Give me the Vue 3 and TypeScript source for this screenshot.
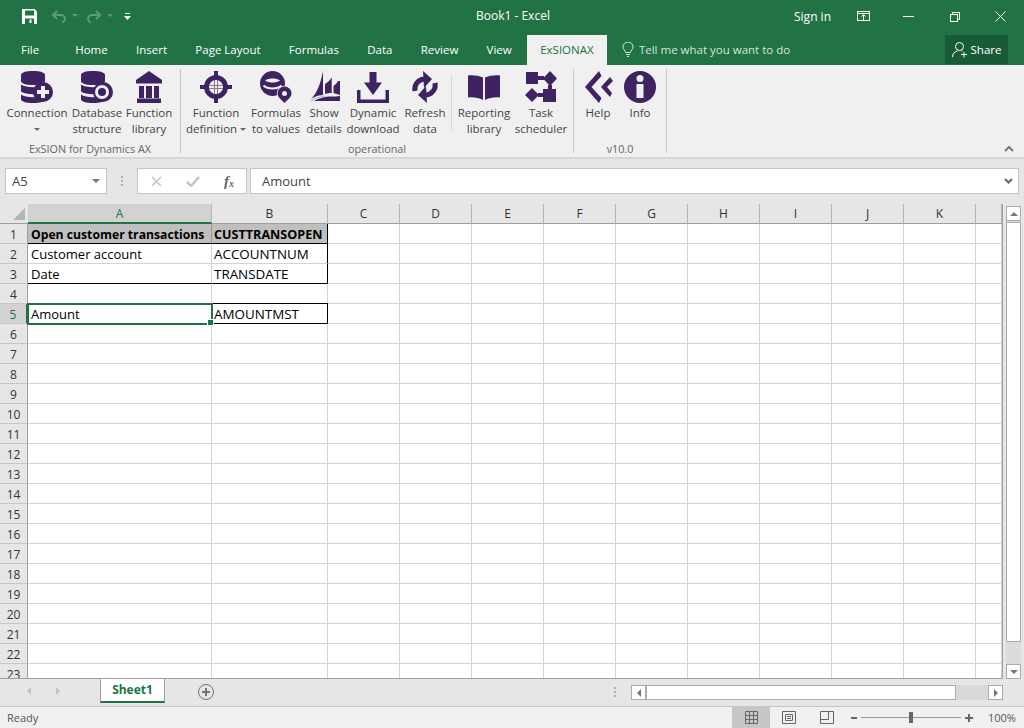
<script setup lang="ts">
interface RibbonItem {
  icon: string;
  lines: string[];
  width: number;
  caret?: boolean;
}

interface RibbonGroup {
  label: string;
  width: number;
  items: RibbonItem[];
  split?: number;
}

const tabs = ['File', 'Home', 'Insert', 'Page Layout', 'Formulas', 'Data', 'Review', 'View'];

const groups: RibbonGroup[] = [
  {
    label: 'ExSION for Dynamics AX',
    width: 181,
    items: [
      { icon: 'connection', lines: ['Connection'], width: 62, caret: true },
      { icon: 'database', lines: ['Database', 'structure'], width: 58 },
      { icon: 'library', lines: ['Function', 'library'], width: 46 },
    ],
  },
  {
    label: 'operational',
    width: 393,
    split: 5,
    items: [
      { icon: 'target', lines: ['Function', 'definition'], width: 58, caret: true },
      { icon: 'pin', lines: ['Formulas', 'to values'], width: 62 },
      { icon: 'sails', lines: ['Show', 'details'], width: 34 },
      { icon: 'download', lines: ['Dynamic', 'download'], width: 64 },
      { icon: 'refresh', lines: ['Refresh', 'data'], width: 40 },
      { icon: 'book', lines: ['Reporting', 'library'], width: 64 },
      { icon: 'task', lines: ['Task', 'scheduler'], width: 50 },
    ],
  },
  {
    label: 'v10.0',
    width: 93,
    items: [
      { icon: 'help', lines: ['Help'], width: 36 },
      { icon: 'info', lines: ['Info'], width: 48 },
    ],
  },
];

const columns = ['A', 'B', 'C', 'D', 'E', 'F', 'G', 'H', 'I', 'J', 'K', ''];
const rows = Array.from({ length: 23 }, (_, i) => i + 1);

const cells: Record<string, string> = {
  A1: 'Open customer transactions',
  B1: 'CUSTTRANSOPEN',
  A2: 'Customer account',
  B2: 'ACCOUNTNUM',
  A3: 'Date',
  B3: 'TRANSDATE',
  A5: 'Amount',
  B5: 'AMOUNTMST',
};

function cellClass(col: string, row: number) {
  const id = col + row;
  return {
    'cell--a': col === 'A',
    'cell--b': col === 'B',
    'cell--head': row === 1 && (col === 'A' || col === 'B'),
    'cell--selected': id === 'A5',
    'cell--box-top': row === 5 && col === 'B',
    'cell--box-bottom': (row === 1 || row === 3 || row === 5) && (col === 'A' || col === 'B') && id !== 'A5',
    'cell--box-right': (row === 1 || row === 2 || row === 3 || row === 5) && col === 'B',
    'cell--box-split': row === 1 && col === 'A',
  };
}
</script>

<template>
  <div class="window">
    <header class="titlebar">
      <div class="quick">
        <svg class="q-save" width="15" height="15" viewBox="0 0 15 15">
          <path d="M0 0h12.500L15 2.500V15H0z" fill="#fff" />
          <rect x="3" y="1.500" width="9" height="5" fill="#217346" />
          <rect x="3" y="9.500" width="9" height="5.500" fill="#217346" />
          <rect x="7.500" y="10.500" width="2" height="3.500" fill="#fff" />
        </svg>
        <svg class="q-undo" width="30" height="14" viewBox="0 0 30 14" fill="none" stroke="#5e9a79" stroke-width="2">
          <path d="M6 1 2 5l4 4M2 5h8a4 4 0 0 1 4 4 4 4 0 0 1-3 3.500" />
          <path d="M21 5h6l-3 3z" fill="#5e9a79" stroke="none" transform="translate(0 -1)" />
        </svg>
        <svg class="q-redo" width="30" height="14" viewBox="0 0 30 14" fill="none" stroke="#5e9a79" stroke-width="2">
          <path d="M10 1l4 4-4 4M14 5H6a4 4 0 0 0-4 4 4 4 0 0 0 3 3.500" />
          <path d="M21 5h6l-3 3z" fill="#5e9a79" stroke="none" transform="translate(0 -1)" />
        </svg>
        <svg class="q-more" width="7" height="8" viewBox="0 0 7 8">
          <rect x="1" y="0" width="5" height="1" fill="#fff" />
          <path d="M0 3h7L3.500 7z" fill="#fff" />
        </svg>
      </div>
      <div class="title">Book1 - Excel</div>
      <div class="win-actions">
        <span class="signin">Sign in</span>
        <svg class="w-display" width="14" height="11" viewBox="0 0 14 11" fill="none" stroke="#fff">
          <rect x="0.500" y="0.500" width="12" height="9" />
          <path d="M0.500 2.500h12M6.500 9V4M4.500 5.500l2-2 2 2" />
        </svg>
        <svg class="w-min" width="11" height="1" viewBox="0 0 11 1"><rect width="11" height="1" fill="#fff" /></svg>
        <svg class="w-restore" width="10" height="10" viewBox="0 0 10 10" fill="none" stroke="#fff">
          <rect x="0.500" y="2.500" width="7" height="7" />
          <path d="M2.500 2.500v-2h7v7h-2" />
        </svg>
        <svg class="w-close" width="11" height="11" viewBox="0 0 11 11" fill="none" stroke="#fff">
          <path d="M0.500 0.500l10 10M10.500 0.500l-10 10" />
        </svg>
      </div>
    </header>

    <nav class="tabbar">
      <span v-for="tab in tabs" :key="tab" class="tab" :class="'tab--' + tab.replace(' ', '')">{{ tab }}</span>
      <span class="tab tab--active">ExSIONAX</span>
      <span class="tell">
        <svg width="12" height="15" viewBox="0 0 12 15" fill="none" stroke="#d5e5dc">
          <path d="M3.500 10.500c0-2-2.500-3-2.500-5.500a5 5 0 0 1 10 0c0 2.500-2.500 3.500-2.500 5.500zM4 12.500h4M5 14.500h2" />
        </svg>
        Tell me what you want to do
      </span>
      <span class="share">
        <svg width="16" height="17" viewBox="0 0 16 17" fill="none" stroke="#fff">
          <circle cx="7.500" cy="5.500" r="4" />
          <path d="M0.500 16c0-3 2-5.500 5-6M9.500 10h1M12 11v5.500M9 13.500h6" />
        </svg>
        Share
      </span>
    </nav>

    <section class="ribbon">
      <div v-for="group in groups" :key="group.label" class="group" :style="{ width: group.width + 'px' }">
        <div class="group-items">
          <template v-for="(item, i) in group.items" :key="item.icon">
            <span v-if="group.split === i" class="inner-sep"></span>
            <div class="rb" :style="{ width: item.width + 'px' }">
              <svg class="rb-icon" width="32" height="32" viewBox="0 0 32 32" fill="#3f2261">
                <template v-if="item.icon === 'connection' || item.icon === 'database'">
                  <path d="M0 4C0 1.500 5 0 12 0s12 1.500 12 4v6c0 2.500-5 4-12 4S0 12.500 0 10z" />
                  <path d="M0 13.500c2.500 1.800 7 2.700 12 2.700s9.500-.9 12-2.700v7c-2.500 1.800-7 2.700-12 2.700S2.500 22.300 0 20.500z" />
                  <path d="M0 23.500c2.500 1.800 7 2.700 12 2.700s9.500-.9 12-2.700V28c0 2.500-5 4-12 4S0 30.500 0 28z" />
                  <circle cx="22" cy="21" r="10" />
                  <path v-if="item.icon === 'connection'" d="M20 15h4v4h4v4h-4v4h-4v-4h-4v-4h4z" fill="#f0f0f0" />
                  <template v-else>
                    <circle cx="21" cy="21" r="7" fill="#f0f0f0" />
                    <circle cx="21" cy="21" r="4" />
                  </template>
                </template>
                <template v-else-if="item.icon === 'library'">
                  <path d="M16 0l13 9v3.500H3V9z" />
                  <rect x="6" y="15" width="5" height="12" />
                  <rect x="13" y="15" width="6" height="12" />
                  <rect x="21" y="15" width="5" height="12" />
                  <rect x="4" y="27.500" width="24" height="4.500" />
                </template>
                <template v-else-if="item.icon === 'target'">
                  <path fill-rule="evenodd" d="M16 4a12 12 0 1 1 0 24 12 12 0 0 1 0-24zm0 5a7 7 0 1 0 0 14 7 7 0 0 0 0-14z" />
                  <rect x="14" y="0" width="4" height="8" />
                  <rect x="14" y="24" width="4" height="8" />
                  <rect x="0" y="14" width="8" height="4" />
                  <rect x="24" y="14" width="8" height="4" />
                  <path d="M14.500 9v14M17.500 9v14M9 14.500h14M9 17.500h14" stroke="#8a7699" stroke-width="1" fill="none" />
                </template>
                <template v-else-if="item.icon === 'pin'">
                  <circle cx="12.500" cy="12.500" r="12.500" />
                  <path d="M5 9.500c2-1.500 5-2 7.500-2s5.500.5 7.500 2c-2 1.500-5 2-7.500 2s-5.500-.5-7.500-2z" fill="#f0f0f0" />
                  <path d="M3.500 14.500c2 1.800 5.500 3 9 3s7-1.200 9-3" fill="none" stroke="#f0f0f0" stroke-width="2" />
                  <path fill-rule="evenodd" d="M24.500 15.500a7 7 0 0 1 7 7c0 3.500-4 6.500-7 9.500-3-3-7-6-7-9.500a7 7 0 0 1 7-7zm0 4.500a2.500 2.500 0 1 0 0 5 2.500 2.500 0 0 0 0-5z" stroke="#f0f0f0" stroke-width="1.500" paint-order="stroke" />
                </template>
                <template v-else-if="item.icon === 'sails'">
                  <path d="M0 30C7 26 12 16 15 0v24C9.500 24 4 27 0 30z" />
                  <path d="M17 23V13c2.500-1.500 5-3.500 6.700-6.700V22c-2.500 0-4.500.3-6.700 1z" />
                  <path d="M25.500 22V15c2-1.500 3.500-3 4.500-5h2v14z" />
                  <path d="M6 30c5-3 11-4.500 16-4.500 4 0 7 0 10-.5v5z" />
                  <path d="M3 30c4-3 9-4.500 14-5" fill="none" stroke="#b9afc4" stroke-width="1" />
                </template>
                <template v-else-if="item.icon === 'download'">
                  <path d="M12.500 1h7v10.500H25L16 24 7 11.500h5.500z" />
                  <path d="M0 19h3.500v9.500h25V19H32v13H0z" />
                </template>
                <template v-else-if="item.icon === 'refresh'">
                  <g>
                    <path d="M14 0l9 8-8 9z" />
                    <path d="M6 20A10 10 0 0 1 15 8" fill="none" stroke="#3f2261" stroke-width="5" />
                  </g>
                  <g transform="rotate(180 16 16)">
                    <path d="M14 0l9 8-8 9z" />
                    <path d="M6 20A10 10 0 0 1 15 8" fill="none" stroke="#3f2261" stroke-width="5" />
                  </g>
                </template>
                <template v-else-if="item.icon === 'book'">
                  <path d="M0 4.500c5-.5 10 0 15 2V29c-4-2-9-3-15-2.500z" />
                  <path d="M32 4.500c-5-.5-10 0-15 2V29c4-2 9-3 15-2.500z" />
                </template>
                <template v-else-if="item.icon === 'task'">
                  <rect x="1" y="1" width="12" height="12" />
                  <path d="M25 0l7 7.500-7 7.500-7-7.500z" />
                  <path d="M7 17l7 7-7 7-7-7z" />
                  <rect x="18" y="18" width="13" height="13" />
                  <path d="M13 5h6v4h-6zM23 14h4v5h-4zM13 22h6v4h-6z" />
                </template>
                <template v-else-if="item.icon === 'help'">
                  <path d="M3 16 17 0l2.500 5-10 11 10 11L17 32z" />
                  <path d="M28 6l3 4-6 6 5 6-2 4-9-10z" />
                </template>
                <template v-else>
                  <circle cx="16" cy="16" r="16" />
                  <circle cx="16" cy="7.500" r="3.500" fill="#f0f0f0" />
                  <rect x="12.500" y="13" width="7" height="14" fill="#f0f0f0" />
                </template>
              </svg>
              <div class="rb-text">
                <span v-for="line in item.lines" :key="line" class="rb-line">{{ line }}<i v-if="item.caret && line === 'definition'" class="caret"></i></span>
                <span v-if="item.caret && item.lines.length === 1" class="rb-line"><i class="caret caret--alone"></i></span>
              </div>
            </div>
          </template>
        </div>
        <div class="group-label">{{ group.label }}</div>
      </div>
      <svg class="collapse" width="10" height="6" viewBox="0 0 10 6" fill="none" stroke="#777" stroke-width="2">
        <path d="M1 5l4-4 4 4" />
      </svg>
    </section>

    <section class="formula">
      <div class="namebox">
        <span>A5</span>
        <i class="namebox-caret"></i>
      </div>
      <div class="formula-dots"><i></i><i></i><i></i></div>
      <div class="fx-box">
        <svg width="11" height="11" viewBox="0 0 11 11" fill="none" stroke="#c6c6c6" stroke-width="1.500"><path d="M1 1l9 9M10 1l-9 9" /></svg>
        <svg width="14" height="11" viewBox="0 0 14 11" fill="none" stroke="#c6c6c6" stroke-width="2.500"><path d="M1 6l4 4 8-9" /></svg>
        <span class="fx">f<sub>x</sub></span>
      </div>
      <div class="formula-input">
        <span>Amount</span>
        <svg width="9" height="6" viewBox="0 0 9 6" fill="none" stroke="#666" stroke-width="2"><path d="M1 1l3.500 3.500L8 1" /></svg>
      </div>
    </section>

    <section class="sheet-area">
      <div class="sheet-clip">
        <div class="sheet">
          <div class="corner"><i></i></div>
          <div v-for="col in columns" :key="col" class="col-head" :class="{ 'col-head--on': col === 'A' }">{{ col }}</div>
          <template v-for="row in rows" :key="row">
            <div class="row-head" :class="{ 'row-head--on': row === 5 }">{{ row }}</div>
            <div
              v-for="col in columns"
              :key="col + row"
              class="cell"
              :class="cellClass(col, row)"
            >{{ cells[col + row] }}</div>
          </template>
        </div>
      </div>
      <div class="vscroll">
        <span class="sb-btn"><i class="arrow-up"></i></span>
        <span class="sb-track"><span class="sb-thumb"></span></span>
        <span class="sb-btn"><i class="arrow-down"></i></span>
      </div>
    </section>

    <section class="sheetbar">
      <i class="nav-left"></i>
      <i class="nav-right"></i>
      <span class="sheet-tab">Sheet1</span>
      <svg class="add-sheet" width="16" height="16" viewBox="0 0 16 16" fill="none" stroke="#777">
        <circle cx="8" cy="8" r="7.500" />
        <path d="M8 4v8M4 8h8" stroke-width="2" />
      </svg>
      <div class="formula-dots formula-dots--bar"><i></i><i></i><i></i></div>
      <div class="hscroll">
        <span class="hs-btn"><i class="arrow-left"></i></span>
        <span class="hs-thumb"></span>
        <span class="hs-rest"></span>
        <span class="hs-btn"><i class="arrow-right"></i></span>
      </div>
    </section>

    <footer class="status">
      <span class="ready">Ready</span>
      <div class="views">
        <span class="view view--on">
          <svg width="13" height="13" viewBox="0 0 13 13" fill="none" stroke="#666">
            <path d="M.5.500h12v12H.500zM.500 4.500h12M.500 8.500h12M4.500.500v12M8.500.500v12" />
          </svg>
        </span>
        <span class="view">
          <svg width="14" height="13" viewBox="0 0 14 13" fill="none" stroke="#666">
            <path d="M.5.500h13v12H.500zM3.500 3.500h7v6h-7zM5 5.500h4M5 7.500h4" />
          </svg>
        </span>
        <span class="view">
          <svg width="14" height="13" viewBox="0 0 14 13" fill="none" stroke="#666">
            <path d="M.5.500h13v12H.500zM.500 8.500h8V.500" />
          </svg>
        </span>
      </div>
      <div class="zoom">
        <i class="zoom-minus"></i>
        <div class="zoom-track"><i class="zoom-thumb"></i></div>
        <i class="zoom-plus"></i>
        <span class="zoom-pct">100%</span>
      </div>
    </footer>
  </div>
</template>

<style scoped>
.window {
  width: 1024px;
  height: 728px;
  display: flex;
  flex-direction: column;
  overflow: hidden;
  background: #e6e6e6;
  font-family: "Open Sans", "Noto Sans", sans-serif;
  font-size: 11.5px;
  color: #444;
}

.titlebar {
  height: 33px;
  flex: none;
  background: #217346;
  color: #fff;
  display: flex;
  align-items: center;
  position: relative;
}

.quick {
  display: flex;
  align-items: center;
  padding-left: 22px;
}

.q-undo { margin-left: 14px; }
.q-redo { margin-left: 5px; }
.q-more { margin-left: 8px; }

.title {
  position: absolute;
  left: 476px;
  top: 8px;
  font-size: 12px;
  line-height: 16px;
}

.win-actions {
  margin-left: auto;
  display: flex;
  align-items: center;
}

.signin { margin-right: 26px; line-height: 16px; font-size: 12px; }
.w-display { margin-right: 32px; }
.w-min { margin-right: 36px; }
.w-restore { margin-right: 35px; }
.w-close { margin-right: 18px; }

.tabbar {
  height: 32px;
  flex: none;
  background: #217346;
  color: #fff;
  display: flex;
  align-items: flex-end;
  position: relative;
}

.tab {
  height: 30px;
  line-height: 30px;
  white-space: nowrap;
  margin-left: 28.300px;
}

.tab--File { margin-left: 21px; }
.tab--Home { margin-left: 36px; }

.tab--active {
  margin-left: 15.200px;
  width: 80px;
  text-align: center;
  background: #f0f0f0;
  color: #217346;
}

.tell {
  margin-left: 15px;
  height: 29px;
  margin-bottom: 1px;
  display: flex;
  align-items: center;
  gap: 5px;
  color: #d5e5dc;
}

.share {
  position: absolute;
  right: 16px;
  top: 2px;
  width: 63px;
  height: 29px;
  background: #185c37;
  display: flex;
  align-items: center;
  justify-content: center;
  gap: 3px;
}

.ribbon {
  height: 92px;
  flex: none;
  background: #f0f0f0;
  border-bottom: 2px solid #d6d6d6;
  display: flex;
  position: relative;
}

.group {
  height: 84px;
  margin-top: 4px;
  border-right: 1px solid #c6c6c6;
  display: flex;
  flex-direction: column;
  box-sizing: border-box;
  flex: none;
}

.group-items {
  height: 72px;
  flex: none;
  box-sizing: border-box;
  padding: 2px 0 0 6px;
  display: flex;
  align-items: flex-start;
}

.inner-sep {
  width: 1px;
  height: 55px;
  margin: 4px 0 0 6px;
  background: #d6d6d6;
  flex: none;
}

.rb {
  display: flex;
  flex-direction: column;
  align-items: center;
  flex: none;
}

.rb-icon { flex: none; }

.rb-text {
  margin-top: 2px;
  display: flex;
  flex-direction: column;
  align-items: center;
}

.rb-line {
  line-height: 16px;
  white-space: nowrap;
}

.caret {
  display: inline-block;
  width: 0;
  height: 0;
  margin-left: 3px;
  vertical-align: 2px;
  border-left: 3px solid transparent;
  border-right: 3px solid transparent;
  border-top: 3px solid #666;
}

.caret--alone { margin-left: 0; }

.group-label {
  text-align: center;
  font-size: 10.800px;
  line-height: 15px;
  color: #666;
}

.collapse {
  position: absolute;
  right: 10px;
  top: 81px;
}

.formula {
  height: 45px;
  flex: none;
  box-sizing: border-box;
  padding-top: 9px;
  display: flex;
  align-items: flex-start;
}

.namebox {
  margin-left: 5px;
  width: 102px;
  height: 26px;
  box-sizing: border-box;
  border: 1px solid #c6c6c6;
  background: #fff;
  display: flex;
  align-items: center;
  padding: 0 6px;
  font-size: 13px;
  color: #444;
}

.namebox-caret {
  margin-left: auto;
  width: 0;
  height: 0;
  border-left: 4px solid transparent;
  border-right: 4px solid transparent;
  border-top: 4px solid #777;
}

.formula-dots {
  width: 30px;
  height: 26px;
  display: flex;
  flex-direction: column;
  justify-content: center;
  align-items: center;
  gap: 2px;
}

.formula-dots i {
  width: 2px;
  height: 2px;
  background: #b0b0b0;
}

.fx-box {
  width: 110px;
  height: 26px;
  box-sizing: border-box;
  border: 1px solid #c6c6c6;
  background: #fff;
  display: flex;
  align-items: center;
  padding-left: 13px;
  gap: 24px;
}

.fx {
  font-family: "Liberation Serif", serif;
  font-style: italic;
  font-weight: 700;
  font-size: 15px;
  color: #666;
}

.fx sub { font-size: 10px; vertical-align: -1px; line-height: 0; }

.formula-input {
  margin-left: 3px;
  width: 769px;
  height: 26px;
  box-sizing: border-box;
  border: 1px solid #c6c6c6;
  background: #fff;
  display: flex;
  align-items: center;
  justify-content: space-between;
  padding: 0 5px 0 11px;
  font-size: 13px;
  color: #444;
}

.sheet-area {
  height: 475px;
  flex: none;
  display: flex;
  position: relative;
}

.sheet-clip {
  width: 1003px;
  height: 475px;
  overflow: hidden;
  flex: none;
  border-bottom: 1px solid #9f9f9f;
  border-right: 1px solid #9f9f9f;
  box-sizing: border-box;
}

.sheet {
  display: grid;
  grid-template-columns: 28px 184px 116px repeat(9, 72px) 26px;
  grid-auto-rows: 20px;
  font-size: 13px;
  background: #fff;
  color: #000;
  width: 1002px;
}

.corner {
  background: #e6e6e6;
  border-bottom: 1px solid #9f9f9f;
  box-sizing: border-box;
  position: relative;
}

.corner i {
  position: absolute;
  right: 3px;
  bottom: 3px;
  width: 0;
  height: 0;
  border-left: 12px solid transparent;
  border-bottom: 12px solid #b5b5b5;
}

.col-head {
  background: #e6e6e6;
  border-right: 1px solid #b5b5b5;
  border-bottom: 1px solid #9f9f9f;
  box-sizing: border-box;
  text-align: center;
  font-size: 12px;
  line-height: 19px;
  color: #333;
}

.col-head--on {
  background: #d2d2d2;
  border-bottom: 2px solid #217346;
  color: #217346;
}

.row-head {
  background: #e6e6e6;
  border-right: 1px solid #9f9f9f;
  border-bottom: 1px solid #c6c6c6;
  box-sizing: border-box;
  text-align: center;
  font-size: 12px;
  line-height: 21px;
  color: #333;
}

.row-head--on {
  background: #d2d2d2;
  color: #217346;
  border-right: 2px solid #217346;
}

.cell {
  box-sizing: border-box;
  border-right: 1px solid #d4d4d4;
  border-bottom: 1px solid #d4d4d4;
  padding-left: 2px;
  line-height: 20px;
  white-space: nowrap;
  overflow: visible;
  position: relative;
}

.cell--a { padding-left: 3px; }
.cell--b { font-size: 13.400px; }

.cell--head {
  background: #bfbfbf;
  font-weight: 700;
  font-size: 12.600px;
  line-height: 21px;
}

.cell--head.cell--a { font-size: 12.200px; }

.cell--box-bottom { border-bottom-color: #000; }
.cell--box-right { border-right-color: #000; }
.cell--box-split { border-right-color: #999; }

.cell--box-top::before {
  content: "";
  position: absolute;
  left: -1px;
  right: -1px;
  top: -1px;
  height: 1px;
  background: #000;
}

.cell--selected {
  outline: 2px solid #217346;
  outline-offset: -1px;
  z-index: 2;
}

.cell--selected::after {
  content: "";
  position: absolute;
  right: -3px;
  bottom: -3px;
  width: 5px;
  height: 5px;
  background: #217346;
  border: 1px solid #fff;
}

.vscroll {
  margin-left: 3px;
  width: 15px;
  height: 475px;
  display: flex;
  flex-direction: column;
}

.sb-btn {
  height: 15px;
  flex: none;
  box-sizing: border-box;
  border: 1px solid #ababab;
  background: #fff;
  display: flex;
  align-items: center;
  justify-content: center;
}

.sb-btn:first-child { margin-top: 2px; }

.sb-track {
  flex: 1;
  display: flex;
  flex-direction: column;
  background: #dcdcdc;
}

.sb-thumb {
  height: 420px;
  margin-top: 1px;
  box-sizing: border-box;
  border: 1px solid #ababab;
  background: #fff;
}

.arrow-up {
  width: 0;
  height: 0;
  border-left: 4px solid transparent;
  border-right: 4px solid transparent;
  border-bottom: 4px solid #777;
}

.arrow-down {
  width: 0;
  height: 0;
  border-left: 4px solid transparent;
  border-right: 4px solid transparent;
  border-top: 4px solid #777;
}

.sheetbar {
  height: 27px;
  flex: none;
  display: flex;
  align-items: flex-start;
}

.nav-left,
.nav-right {
  width: 0;
  height: 0;
  margin-top: 8px;
  border-top: 4px solid transparent;
  border-bottom: 4px solid transparent;
}

.nav-left {
  margin-left: 27px;
  border-right: 4px solid #c2c2c2;
}

.nav-right {
  margin-left: 25px;
  border-left: 4px solid #c2c2c2;
}

.sheet-tab {
  margin-left: 40px;
  margin-top: -1px;
  width: 65px;
  height: 25px;
  box-sizing: border-box;
  background: #fff;
  border: 1px solid #9f9f9f;
  border-top: none;
  border-bottom: 2px solid #217346;
  color: #217346;
  font-weight: 700;
  text-align: center;
  line-height: 23px;
  font-size: 12px;
}

.add-sheet {
  margin-left: 33px;
  margin-top: 5px;
}

.formula-dots--bar {
  margin-left: 391px;
  height: 22px;
  width: 20px;
  margin-top: 2px;
}

.hscroll {
  margin-left: 6px;
  margin-top: 6px;
  width: 372px;
  height: 15px;
  display: flex;
  background: #d9d9d9;
}

.hs-btn {
  width: 15px;
  flex: none;
  box-sizing: border-box;
  border: 1px solid #ababab;
  background: #fff;
  display: flex;
  align-items: center;
  justify-content: center;
}

.hs-thumb {
  width: 310px;
  flex: none;
  box-sizing: border-box;
  border: 1px solid #ababab;
  background: #fff;
}

.hs-rest { flex: 1; }

.arrow-left {
  width: 0;
  height: 0;
  border-top: 4px solid transparent;
  border-bottom: 4px solid transparent;
  border-right: 4px solid #777;
}

.arrow-right {
  width: 0;
  height: 0;
  border-top: 4px solid transparent;
  border-bottom: 4px solid transparent;
  border-left: 4px solid #777;
}

.status {
  height: 22px;
  flex: none;
  box-sizing: border-box;
  border-top: 1px solid #c6c6c6;
  background: #f0f0f0;
  display: flex;
  align-items: center;
  font-size: 11px;
  color: #555;
}

.ready { margin-left: 7px; }

.views {
  margin-left: auto;
  display: flex;
  height: 21px;
}

.view {
  width: 38px;
  display: flex;
  align-items: center;
  justify-content: center;
}

.view--on { background: #c6c6c6; }

.zoom {
  width: 177px;
  display: flex;
  align-items: center;
  margin-right: 1px;
}

.zoom-minus {
  margin-left: 5px;
  width: 6px;
  height: 2px;
  background: #666;
}

.zoom-track {
  margin-left: 4px;
  width: 100px;
  height: 1px;
  background: #999;
  position: relative;
}

.zoom-thumb {
  position: absolute;
  left: 48px;
  top: -5px;
  width: 4px;
  height: 11px;
  background: #666;
}

.zoom-plus {
  margin-left: 4px;
  width: 8px;
  height: 8px;
  background:
    linear-gradient(#666, #666) center / 8px 2px no-repeat,
    linear-gradient(#666, #666) center / 2px 8px no-repeat;
}

.zoom-pct { margin-left: 15px; }
</style>
